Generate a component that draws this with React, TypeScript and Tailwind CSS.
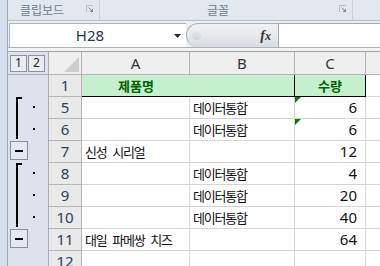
import React from 'react';

// Excel 2010 (Korean UI) sheet with outline groups

const KR = "font-['Noto_Sans_CJK_KR','Noto_Sans',sans-serif]";
const NUM = "font-['Noto_Sans','Liberation_Sans',sans-serif]";

type Outline = 'start' | 'mid' | 'last' | 'minus' | 'none';

type Row = {
  n: number;
  a?: string;
  b?: string;
  c?: string;
  mark?: boolean;
  outline: Outline;
};

const rows: Row[] = [
  { n: 5, b: '데이터통합', c: '6', mark: true, outline: 'start' },
  { n: 6, b: '데이터통합', c: '6', mark: true, outline: 'last' },
  { n: 7, a: '신성 시리얼', c: '12', outline: 'minus' },
  { n: 8, b: '데이터통합', c: '4', outline: 'start' },
  { n: 9, b: '데이터통합', c: '20', outline: 'mid' },
  { n: 10, b: '데이터통합', c: '40', outline: 'last' },
  { n: 11, a: '대일 파메쌍 치즈', c: '64', outline: 'minus' },
  { n: 12, outline: 'none' },
];

const Launcher = () => (
  <svg width="8" height="8" viewBox="0 0 8 8">
    <path d="M0.5 7V0.5H7" fill="none" stroke="#b4bcc7" />
    <path d="M2.5 2.5L6 6" stroke="#7d8794" />
    <path d="M3.5 7H7V3.5Z" fill="#7d8794" />
  </svg>
);

const OutlineMark = ({ kind }: { kind: Outline }) => (
  <svg width="41" height="22" viewBox="0 0 41 22">
    {kind === 'start' && (
      <>
        <rect x="8" y="0" width="6" height="2" fill="#000" />
        <rect x="8" y="0" width="2" height="22" fill="#000" />
      </>
    )}
    {kind === 'mid' && <rect x="8" y="0" width="2" height="22" fill="#000" />}
    {kind === 'last' && <rect x="8" y="0" width="2" height="20" fill="#000" />}
    {(kind === 'start' || kind === 'mid' || kind === 'last') && (
      <rect x="25" y="9" width="2" height="2" fill="#000" />
    )}
    {kind === 'minus' && (
      <>
        <rect x="2.5" y="0.5" width="17" height="18" fill="#e4e8f0" stroke="#8a8e96" />
        <rect x="7" y="9" width="8" height="2" fill="#000" />
      </>
    )}
  </svg>
);

const ErrorMark = () => (
  <svg className="absolute left-0 top-0" width="6" height="6" viewBox="0 0 6 6">
    <path d="M0 0H6L0 6Z" fill="#008000" />
  </svg>
);

export default function App() {
  return (
    <div className="flex h-[266px] w-[380px] overflow-hidden bg-white">
      {/* window frame */}
      <div className="w-[8px] shrink-0 border-r border-[#97a6ba] bg-[#d5deea]" />

      <div className="flex min-w-0 flex-1 flex-col">
        {/* ribbon group labels */}
        <div className="flex h-[21px] shrink-0 border-b border-[#b3bcc8] bg-[#e3e8ee]">
          <div className="flex w-[92px] items-center border-r border-[#c9d0d9] pl-[12px] pr-[5px]">
            <span className={`${KR} text-[12px] leading-none text-[#6f7b8b]`}>클립보드</span>
            <span className="ml-auto mt-[-2px]">
              <Launcher />
            </span>
          </div>
          <div className="flex w-[253px] items-center border-r border-[#c9d0d9] pl-[107px] pr-[5px]">
            <span className={`${KR} text-[12px] leading-none text-[#6f7b8b]`}>글꼴</span>
            <span className="ml-auto mt-[-2px]">
              <Launcher />
            </span>
          </div>
          <div className="flex-1" />
        </div>

        {/* formula bar */}
        <div className="flex h-[27px] shrink-0 items-end border-b border-[#a9b1bb] bg-[#eceff3] pl-[1px]">
          <div className="relative flex h-[24px] w-[177px] items-center border-l border-t border-[#aab3bf] bg-white pr-[16px]">
            <span className={`${NUM} w-full text-center text-[15px] leading-none text-[#1d3557]`}>H28</span>
            <svg className="absolute left-[164px] top-[10px]" width="7" height="4" viewBox="0 0 7 4">
              <path d="M0 0H7L3.5 4Z" fill="#2b2b2b" />
            </svg>
          </div>
          <div className="flex h-[24px] w-[92px] items-center rounded-l-[12px] border-l border-t border-[#a8b0ba] bg-gradient-to-b from-[#f1f2f4] to-[#dadee4] pl-[5px] pr-[7px]">
            <span className="h-[9px] w-[9px] rounded-full bg-gradient-to-b from-[#e6e8eb] to-[#cfd3d8]" />
            <span className="ml-auto font-['Liberation_Serif',serif] text-[14px] font-bold italic leading-none text-[#333]">
              f<span className="text-[12px]">x</span>
            </span>
          </div>
          <div className="h-[24px] flex-1 border-l border-t border-[#9ea8b4] bg-white" />
        </div>
        <div className="h-[4px] shrink-0 border-b border-[#a2a2a2] bg-[#f2f3f5]" />

        {/* sheet */}
        <div className="grid grid-cols-[41px_33px_108px_105px_71px_1fr] grid-rows-[23px_repeat(9,22px)]">
          {/* header row */}
          <div className="flex items-center gap-[1px] border-b border-r border-[#a9adb5] bg-[#dde2ec] pl-[2px]">
            <span className={`${NUM} flex h-[17px] w-[17px] items-center justify-center border border-[#8c9099] bg-[#e9ecf1] text-[12px] text-[#222]`}>1</span>
            <span className={`${NUM} flex h-[17px] w-[17px] items-center justify-center border border-[#8c9099] bg-[#e9ecf1] text-[12px] text-[#222]`}>2</span>
          </div>
          <div className="relative border-b border-r border-[#b5b5b5] bg-[#efefef]">
            <svg className="absolute bottom-[2px] right-[2px]" width="15" height="15" viewBox="0 0 15 15">
              <path d="M15 0V15H0Z" fill="#cdcdcd" />
            </svg>
          </div>
          {['A', 'B', 'C'].map((l) => (
            <div
              key={l}
              className={`${NUM} flex items-center justify-center border-b border-r border-[#b5b5b5] bg-[#efefef] text-[15px] text-[#333]`}
            >
              {l}
            </div>
          ))}
          <div className="border-b border-[#b5b5b5] bg-[#efefef]" />

          {/* row 1 */}
          <div className="border-r border-[#a9adb5] bg-[#dde2ec]" />
          <div className={`${NUM} flex items-center justify-center border-b border-r border-[#b5b5b5] bg-[#e9e9e9] text-[15px] text-[#27415f]`}>1</div>
          <div className={`${KR} flex items-center justify-center border-b border-black bg-[#c6efce] text-[13px] font-bold text-[#006100]`}>제품명</div>
          <div className="border-b border-r border-black bg-[#c6efce]" />
          <div className={`${KR} flex items-center justify-center border-b border-r border-black bg-[#c6efce] text-[13px] font-bold text-[#006100]`}>수량</div>
          <div className="border-b border-[#d4d4d4]" />

          {rows.map((r) => (
            <React.Fragment key={r.n}>
              <div className="border-r border-[#a9adb5] bg-[#dde2ec]">
                <OutlineMark kind={r.outline} />
              </div>
              <div className={`${NUM} flex items-center justify-center border-b border-r border-[#b5b5b5] bg-[#e9e9e9] text-[15px] leading-none text-[#27415f]`}>
                {r.n}
              </div>
              <div className={`${KR} flex items-center whitespace-pre border-b border-r border-[#d4d4d4] pl-[3px] text-[13px] tracking-[-1.2px] text-[#111] [word-spacing:4px]`}>
                {r.a}
              </div>
              <div className={`${KR} flex items-center border-b border-r border-[#d4d4d4] pl-[3px] text-[13px] tracking-[-1.2px] text-[#111]`}>
                {r.b}
              </div>
              <div className={`${NUM} relative flex items-center justify-end border-b border-r border-[#d4d4d4] pr-[8px] text-[15px] text-[#111]`}>
                {r.mark && <ErrorMark />}
                {r.c}
              </div>
              <div className="border-b border-[#d4d4d4]" />
            </React.Fragment>
          ))}
        </div>
      </div>
    </div>
  );
}
